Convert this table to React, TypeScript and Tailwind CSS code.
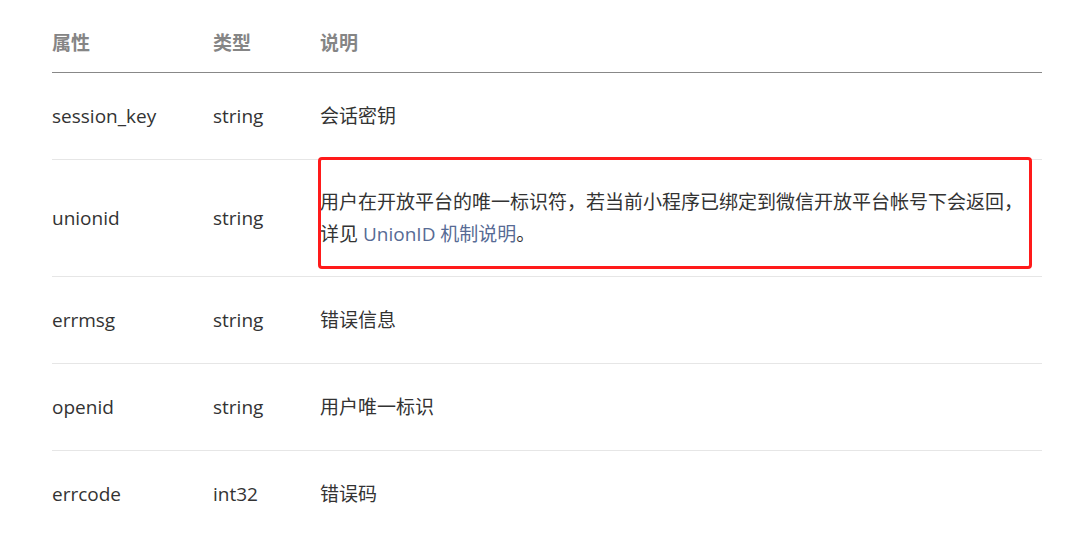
import React from 'react'

type Row = {
    name: string
    type: string
    desc: React.ReactNode
    marked?: boolean
}

const rows: Row[] = [
    { name: 'session_key', type: 'string', desc: '会话密钥' },
    {
        name: 'unionid',
        type: 'string',
        marked: true,
        desc: (
            <>
                用户在开放平台的唯一标识符，若当前小程序已绑定到微信开放平台帐号下会返回，
                <br />
                详见 <span className="text-[#576b95]">UnionID 机制说明</span>。
            </>
        ),
    },
    { name: 'errmsg', type: 'string', desc: '错误信息' },
    { name: 'openid', type: 'string', desc: '用户唯一标识' },
    { name: 'errcode', type: 'int32', desc: '错误码' },
]

const App = () => {
    return (
        <div
            className="w-[1070px] h-[535px] bg-white overflow-hidden pl-[52px] text-[19px] text-[#333]"
            style={{ fontFamily: '"Open Sans", "Noto Sans CJK SC", sans-serif' }}
        >
            <table className="w-[990px] border-collapse text-left">
                <thead>
                    <tr className="border-b border-[#888]">
                        <th className="w-[161px] pt-[28px] pb-[13px] leading-[31px] font-bold text-[#858585]">属性</th>
                        <th className="w-[107px] pt-[28px] pb-[13px] leading-[31px] font-bold text-[#858585]">类型</th>
                        <th className="pt-[28px] pb-[13px] leading-[31px] font-bold text-[#858585]">说明</th>
                    </tr>
                </thead>
                <tbody>
                    {rows.map((row, i) => (
                        <tr key={row.name} className={i < rows.length - 1 ? 'border-b border-[#e6e6e6]' : ''}>
                            <td className="py-[27px] leading-[31px] align-middle">{row.name}</td>
                            <td className="py-[27px] leading-[31px] align-middle">{row.type}</td>
                            <td className={`relative leading-[32px] align-middle ${row.marked ? 'py-[26px]' : 'py-[27px]'}`}>
                                {row.desc}
                                {row.marked && (
                                    <div className="absolute left-[-2px] top-[-3px] right-[10px] bottom-[7px] border-[3px] border-[#ff1a1a] rounded-[4px] pointer-events-none" />
                                )}
                            </td>
                        </tr>
                    ))}
                </tbody>
            </table>
        </div>
    )
}

export default App
